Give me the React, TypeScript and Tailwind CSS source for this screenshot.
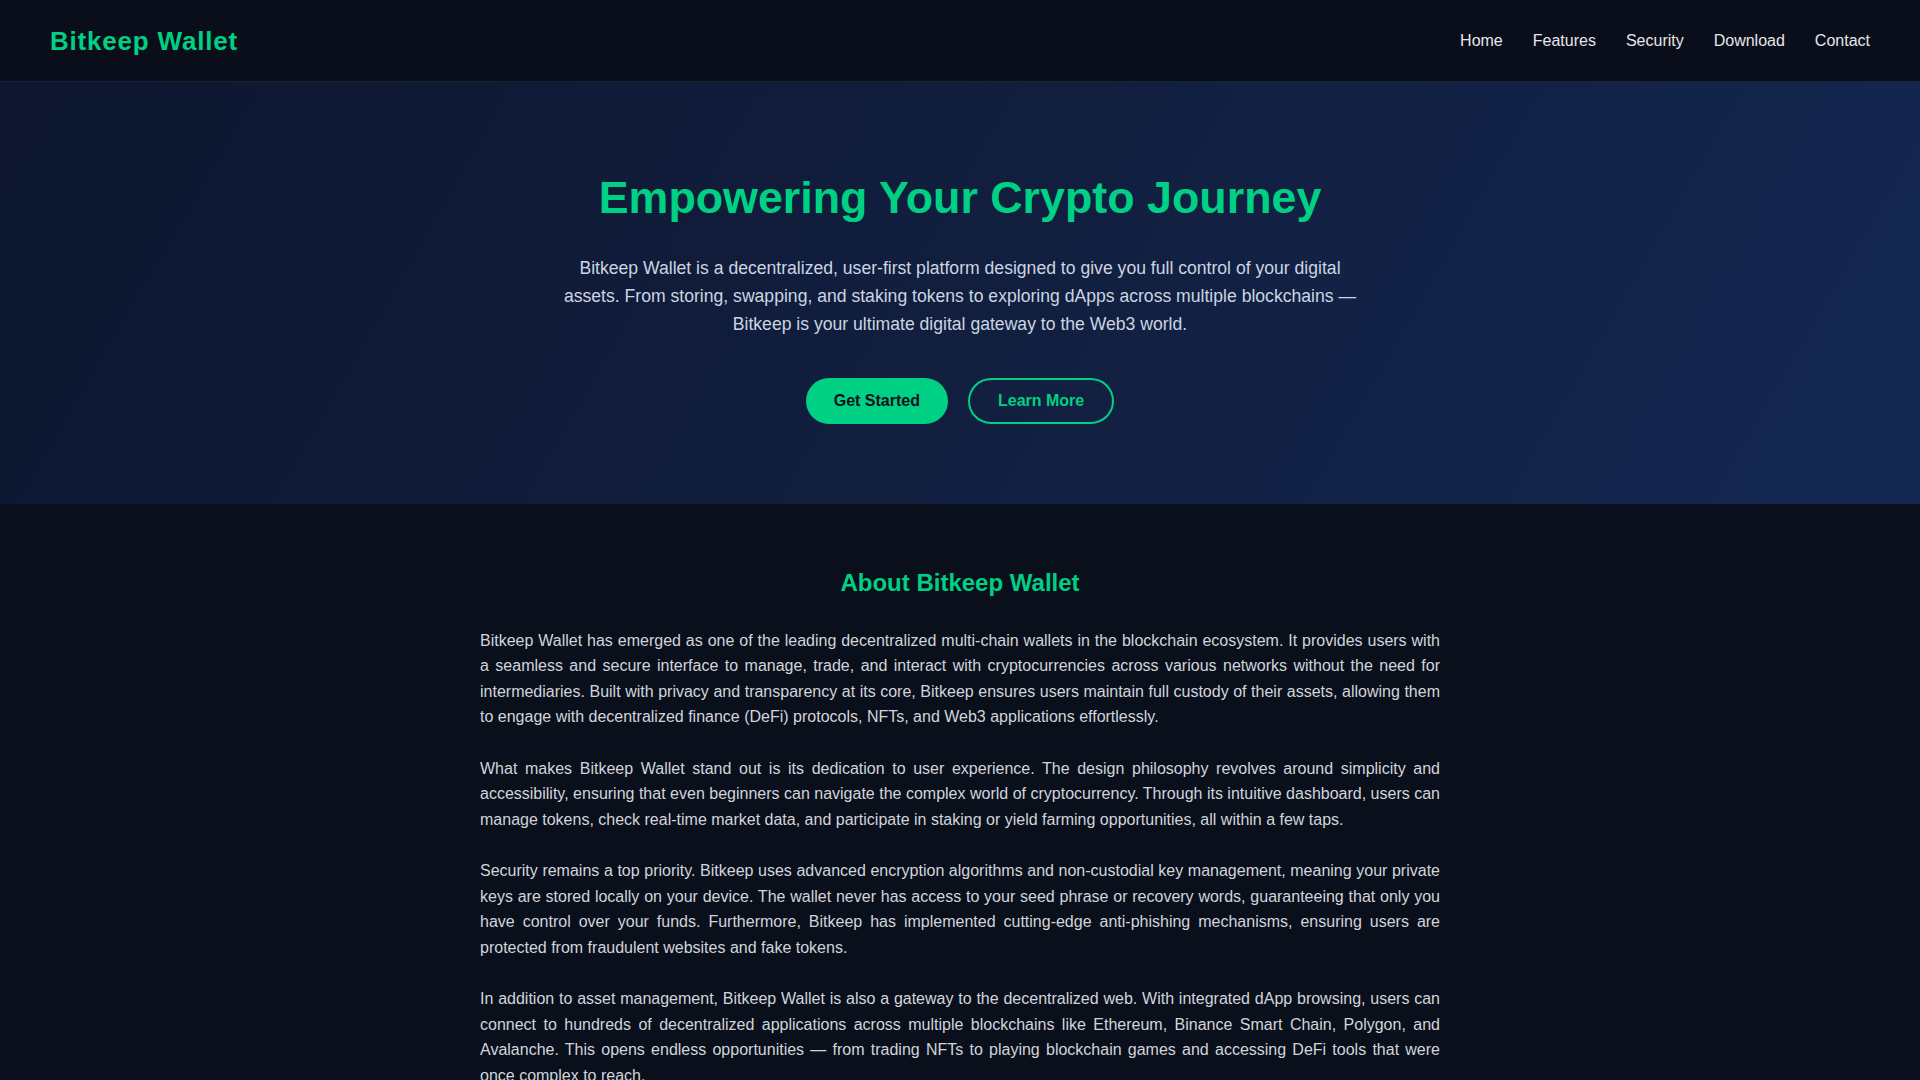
const navItems = ["Home", "Features", "Security", "Download", "Contact"];

const paragraphs = [
  "Bitkeep Wallet has emerged as one of the leading decentralized multi-chain wallets in the blockchain ecosystem. It provides users with a seamless and secure interface to manage, trade, and interact with cryptocurrencies across various networks without the need for intermediaries. Built with privacy and transparency at its core, Bitkeep ensures users maintain full custody of their assets, allowing them to engage with decentralized finance (DeFi) protocols, NFTs, and Web3 applications effortlessly.",
  "What makes Bitkeep Wallet stand out is its dedication to user experience. The design philosophy revolves around simplicity and accessibility, ensuring that even beginners can navigate the complex world of cryptocurrency. Through its intuitive dashboard, users can manage tokens, check real-time market data, and participate in staking or yield farming opportunities, all within a few taps.",
  "Security remains a top priority. Bitkeep uses advanced encryption algorithms and non-custodial key management, meaning your private keys are stored locally on your device. The wallet never has access to your seed phrase or recovery words, guaranteeing that only you have control over your funds. Furthermore, Bitkeep has implemented cutting-edge anti-phishing mechanisms, ensuring users are protected from fraudulent websites and fake tokens.",
  "In addition to asset management, Bitkeep Wallet is also a gateway to the decentralized web. With integrated dApp browsing, users can connect to hundreds of decentralized applications across multiple blockchains like Ethereum, Binance Smart Chain, Polygon, and Avalanche. This opens endless opportunities — from trading NFTs to playing blockchain games and accessing DeFi tools that were once complex to reach.",
];

function Header() {
  return (
    <header className="h-[82px] flex items-center justify-between pl-[50px] pr-[50px] border-b border-[#1c2333] bg-[#0a0e1a]">
      <div className="text-[26px] font-bold tracking-[0.8px] text-[#00d084] leading-none">Bitkeep Wallet</div>
      <nav className="flex items-center gap-[30px]">
        {navItems.map((item) => (
          <a key={item} href="#" className="text-base text-[#e5e7eb] leading-none">
            {item}
          </a>
        ))}
      </nav>
    </header>
  );
}

function Hero() {
  return (
    <section className="py-20 text-center bg-[linear-gradient(120deg,#0d162e_0%,#111e3e_50%,#142852_100%)]">
      <h1 className="text-[44.8px] font-bold leading-[1.6] text-[#00d084] mb-5">Empowering Your Crypto Journey</h1>
      <p className="max-w-[800px] mx-auto text-[17.6px] leading-[1.6] text-[#cbd5e1]">
        Bitkeep Wallet is a decentralized, user-first platform designed to give you full control of your digital assets. From storing, swapping, and staking tokens to exploring dApps across multiple blockchains — Bitkeep is your ultimate digital gateway to the Web3 world.
      </p>
      <div className="mt-10 flex justify-center gap-5">
        <a href="#" className="px-[26px] py-2 leading-[25.6px] border-2 border-[#00d084] bg-[#00d084] text-[#0a0f1c] font-bold rounded-full">
          Get Started
        </a>
        <a href="#" className="px-[28px] py-2 leading-[25.6px] border-2 border-[#00d084] text-[#00d084] font-bold rounded-full">
          Learn More
        </a>
      </div>
    </section>
  );
}

function About() {
  return (
    <section className="pt-[60px] px-5 pb-16">
      <div className="max-w-[960px] mx-auto">
        <h2 className="text-2xl font-bold leading-[1.6] text-center text-[#00d084] mb-[25.6px]">About Bitkeep Wallet</h2>
        {paragraphs.map((text, i) => (
          <p key={i} className="text-base leading-[1.6] text-justify text-[#d1d5db] mb-[25.6px]">
            {text}
          </p>
        ))}
      </div>
    </section>
  );
}

export default function App() {
  return (
    <div className="min-h-screen bg-[#0a0f1c] font-['Liberation_Sans',Arial,sans-serif] leading-[1.6]">
      <Header />
      <Hero />
      <About />
    </div>
  );
}
